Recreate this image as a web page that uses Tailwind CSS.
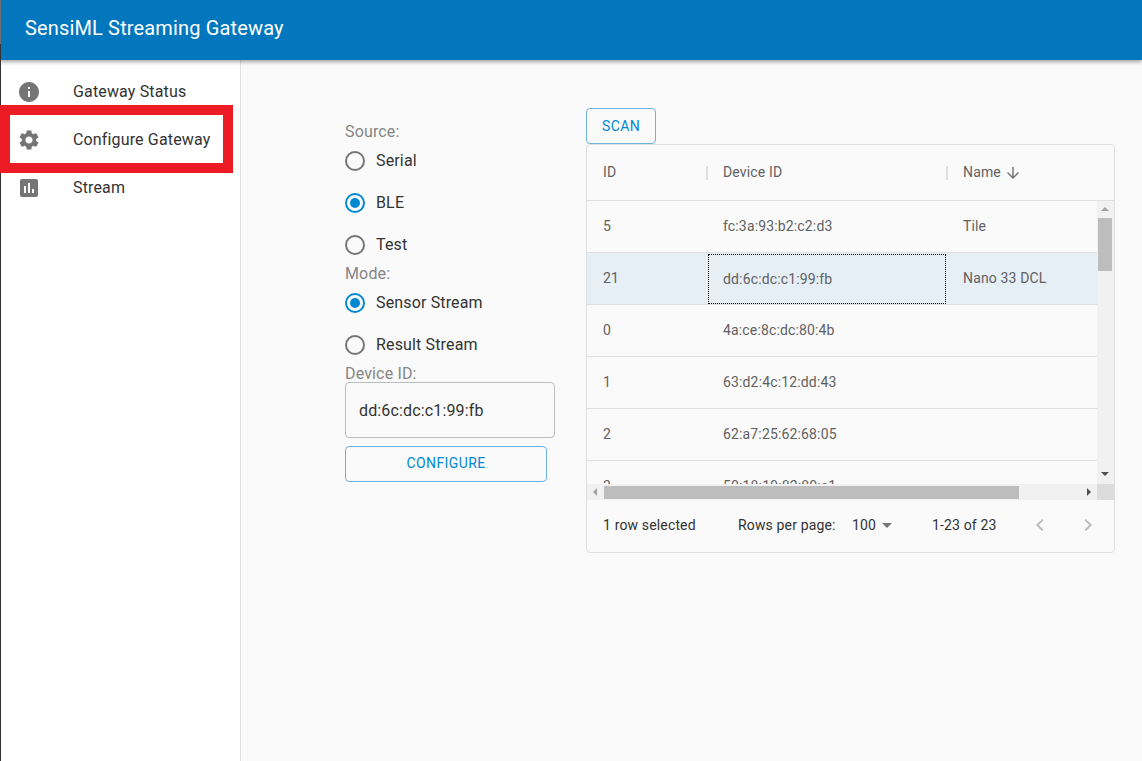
<!DOCTYPE html>
<html>
<head>
<script src="https://cdn.jsdelivr.net/npm/@tailwindcss/browser@4"></script>
</head>
<body class="m-0 bg-[#fafafa]">
<div class="relative w-[1142px] h-[761px] overflow-hidden bg-[#fafafa] font-['Roboto',sans-serif] text-[#212121] flex flex-col">
  <header class="h-[60px] shrink-0 bg-[#0277bd] shadow-[0_2px_4px_rgba(0,0,0,0.35)] relative z-10 flex items-center pl-[25px] text-white text-[20px] leading-[56px] pb-[5px] tracking-[0.15px]">SensiML Streaming Gateway</header>
  <div class="flex flex-1 min-h-0">
    <aside class="w-[241px] shrink-0 bg-white border-r border-[#e0e0e0] pt-[8px] text-[16px] tracking-[0.15px] text-[#333333]">
      <div class="h-[48px] flex items-center pl-[17px]">
        <svg class="w-[24px] h-[24px] fill-[#757575] mr-[32px]" viewBox="0 0 24 24"><path d="M12 2C6.48 2 2 6.48 2 12s4.48 10 10 10 10-4.48 10-10S17.52 2 12 2zm1 15h-2v-6h2v6zm0-8h-2V7h2v2z"/></svg>
        <span>Gateway Status</span>
      </div>
      <div class="h-[48px] flex items-center pl-[17px]">
        <svg class="w-[24px] h-[24px] fill-[#757575] mr-[32px]" viewBox="0 0 24 24"><path d="M19.14 12.94c.04-.3.06-.61.06-.94 0-.32-.02-.64-.07-.94l2.03-1.58c.18-.14.23-.41.12-.61l-1.92-3.32c-.12-.22-.37-.29-.59-.22l-2.39.96c-.5-.38-1.03-.7-1.62-.94l-.36-2.54c-.04-.24-.24-.41-.48-.41h-3.84c-.24 0-.43.17-.47.41l-.36 2.54c-.59.24-1.13.57-1.62.94l-2.39-.96c-.22-.08-.47 0-.59.22L2.74 8.87c-.12.21-.08.47.12.61l2.03 1.58c-.05.3-.09.63-.09.94s.02.64.07.94l-2.03 1.58c-.18.14-.23.41-.12.61l1.92 3.32c.12.22.37.29.59.22l2.39-.96c.5.38 1.03.7 1.62.94l.36 2.54c.05.24.24.41.48.41h3.84c.24 0 .44-.17.47-.41l.36-2.54c.59-.24 1.13-.56 1.62-.94l2.39.96c.22.08.47 0 .59-.22l1.92-3.32c.12-.22.07-.47-.12-.61l-2.01-1.58zM12 15.6c-1.98 0-3.6-1.62-3.6-3.6s1.62-3.6 3.6-3.6 3.6 1.62 3.6 3.6-1.62 3.6-3.6 3.6z"/></svg>
        <span>Configure Gateway</span>
      </div>
      <div class="h-[48px] flex items-center pl-[17px]">
        <svg class="w-[24px] h-[24px] fill-[#757575] mr-[32px]" viewBox="0 0 24 24"><path d="M19 3H5c-1.1 0-2 .9-2 2v14c0 1.1.9 2 2 2h14c1.1 0 2-.9 2-2V5c0-1.1-.9-2-2-2zM9 17H7v-7h2v7zm4 0h-2V7h2v10zm4 0h-2v-4h2v4z"/></svg>
        <span>Stream</span>
      </div>
    </aside>
    <main class="flex-1 flex items-start pl-[104px] pt-[48px]">
      <section class="w-[241px] shrink-0 pt-[15px] text-[16px] tracking-[0.15px] text-[#333333]">
        <div class="text-[#858585] leading-[18px]">Source:</div>
        <div class="h-[42px] flex items-center gap-[11px] mt-[-1px]"><span class="w-[20px] h-[20px] rounded-full border-2 border-[#757575]"></span><span>Serial</span></div>
        <div class="h-[42px] flex items-center gap-[11px]"><span class="w-[20px] h-[20px] rounded-full border-2 border-[#0288d1] flex items-center justify-center"><span class="w-[10px] h-[10px] rounded-full bg-[#0288d1]"></span></span><span>BLE</span></div>
        <div class="h-[42px] flex items-center gap-[11px]"><span class="w-[20px] h-[20px] rounded-full border-2 border-[#757575]"></span><span>Test</span></div>
        <div class="text-[#858585] leading-[18px] mt-[-1px]">Mode:</div>
        <div class="h-[42px] flex items-center gap-[11px] mt-[-1px]"><span class="w-[20px] h-[20px] rounded-full border-2 border-[#0288d1] flex items-center justify-center"><span class="w-[10px] h-[10px] rounded-full bg-[#0288d1]"></span></span><span>Sensor Stream</span></div>
        <div class="h-[42px] flex items-center gap-[11px]"><span class="w-[20px] h-[20px] rounded-full border-2 border-[#757575]"></span><span>Result Stream</span></div>
        <div class="text-[#858585] leading-[18px] mt-[-1px]">Device ID:</div>
        <div class="mt-[-1px] w-[210px] h-[56px] border border-[#bdbdbd] rounded-[4px] flex items-center pl-[13px] pt-[2px]">dd:6c:dc:c1:99:fb</div>
        <button class="mt-[8px] w-[202px] h-[36px] border border-[#6db3dc] rounded-[4px] text-[#0288d1] text-[14px] tracking-[0.4px] flex items-center justify-center pb-[2px]">CONFIGURE</button>
      </section>
      <section class="w-[529px] shrink-0">
        <button class="w-[70px] h-[36px] border border-[#6db3dc] rounded-[4px] text-[#0288d1] text-[14px] tracking-[0.4px] flex items-center justify-center">SCAN</button>
        <div class="w-[529px] h-[409px] border border-[#e0e0e0] rounded-[4px] flex flex-col text-[14px] tracking-[0.15px] text-[#616161]">
          <div class="h-[56px] shrink-0 flex items-center border-b border-[#e0e0e0] text-[#616161]">
            <div class="w-[121px] pl-[16px] h-[14px] flex items-center border-r-2 border-[#e0e0e0]">ID</div>
            <div class="w-[240px] pl-[15px] h-[14px] flex items-center border-r-2 border-[#e0e0e0]">Device ID</div>
            <div class="pl-[15px] flex items-center gap-[3px]">Name
              <svg class="w-[18px] h-[18px] fill-[#757575]" viewBox="0 0 24 24"><path d="M20 12l-1.41-1.41L13 16.17V4h-2v12.17l-5.58-5.59L4 12l8 8 8-8z"/></svg>
            </div>
          </div>
          <div class="relative h-[299px] shrink-0 overflow-hidden">
            <div class="h-[52px] w-[511px] flex items-center border-b border-[#e0e0e0]"><div class="w-[121px] pl-[16px]">5</div><div class="w-[240px] pl-[15px]">fc:3a:93:b2:c2:d3</div><div class="pl-[15px]">Tile</div></div>
            <div class="h-[52px] w-[511px] flex items-center border-b border-[#e0e0e0] bg-[#e6eef6]"><div class="w-[121px] pl-[16px]">21</div><div class="w-[238px] h-[50px] pl-[15px] flex items-center outline-1 outline-dotted outline-black -outline-offset-1 mt-[1px]">dd:6c:dc:c1:99:fb</div><div class="pl-[17px]">Nano 33 DCL</div></div>
            <div class="h-[52px] w-[511px] flex items-center border-b border-[#e0e0e0]"><div class="w-[121px] pl-[16px]">0</div><div class="w-[240px] pl-[15px]">4a:ce:8c:dc:80:4b</div></div>
            <div class="h-[52px] w-[511px] flex items-center border-b border-[#e0e0e0]"><div class="w-[121px] pl-[16px]">1</div><div class="w-[240px] pl-[15px]">63:d2:4c:12:dd:43</div></div>
            <div class="h-[52px] w-[511px] flex items-center border-b border-[#e0e0e0]"><div class="w-[121px] pl-[16px]">2</div><div class="w-[240px] pl-[15px]">62:a7:25:62:68:05</div></div>
            <div class="h-[52px] w-[511px] flex items-center border-b border-[#e0e0e0]"><div class="w-[121px] pl-[16px]">3</div><div class="w-[240px] pl-[15px]">50:18:19:82:80:c1</div></div>
            <div class="absolute right-0 top-0 w-[17px] h-[283px] bg-[#f1f1f1]">
              <div class="absolute left-[4px] top-[6px] w-0 h-0 border-x-[4px] border-x-transparent border-b-[4px] border-b-[#a3a3a3]"></div>
              <div class="absolute left-[1px] top-[17px] w-[14px] h-[53px] bg-[#bdbdbd]"></div>
              <div class="absolute left-[4px] top-[271px] w-0 h-0 border-x-[4px] border-x-transparent border-t-[4px] border-t-[#505050]"></div>
            </div>
            <div class="absolute left-0 bottom-0 w-[511px] h-[16px] bg-[#f1f1f1]">
              <div class="absolute left-[6px] top-[4px] w-0 h-0 border-y-[4px] border-y-transparent border-r-[4px] border-r-[#a3a3a3]"></div>
              <div class="absolute left-[17px] top-[2px] w-[415px] h-[13px] bg-[#bdbdbd]"></div>
              <div class="absolute left-[500px] top-[4px] w-0 h-0 border-y-[4px] border-y-transparent border-l-[4px] border-l-[#505050]"></div>
            </div>
            <div class="absolute right-0 bottom-0 w-[17px] h-[16px] bg-[#dcdcdc]"></div>
          </div>
          <div class="flex-1 flex items-center text-[#333333] pl-[16px] pb-[2px]">
            <span class="w-[135px]">1 row selected</span>
            <span class="w-[114px]">Rows per page:</span>
            <span class="w-[25px]">100</span>
            <svg class="w-[24px] h-[24px] fill-[#757575] ml-[-2px]" viewBox="0 0 24 24"><path d="M7 10l5 5 5-5z"/></svg>
            <span class="ml-[33px] w-[64px] whitespace-nowrap">1-23 of 23</span>
            <svg class="w-[24px] h-[24px] fill-[#bdbdbd] ml-[32px]" viewBox="0 0 24 24"><path d="M15.41 7.41L14 6l-6 6 6 6 1.41-1.41L10.83 12z"/></svg>
            <svg class="w-[24px] h-[24px] fill-[#bdbdbd] ml-[24px]" viewBox="0 0 24 24"><path d="M10 6L8.59 7.41 13.17 12l-4.58 4.59L10 18l6-6z"/></svg>
          </div>
        </div>
      </section>
    </main>
  </div>
  <div class="absolute left-0 top-0 w-[1px] h-[44px] bg-[#6f6f6f] z-20"></div>
  <div class="absolute left-0 top-[44px] w-[1px] h-[717px] bg-[#333333] z-20"></div>
  <div class="absolute left-0 top-[105px] w-[233px] h-[68px] border-[10px] border-[#ed1c24] z-20"></div>
</div>
</body>
</html>
